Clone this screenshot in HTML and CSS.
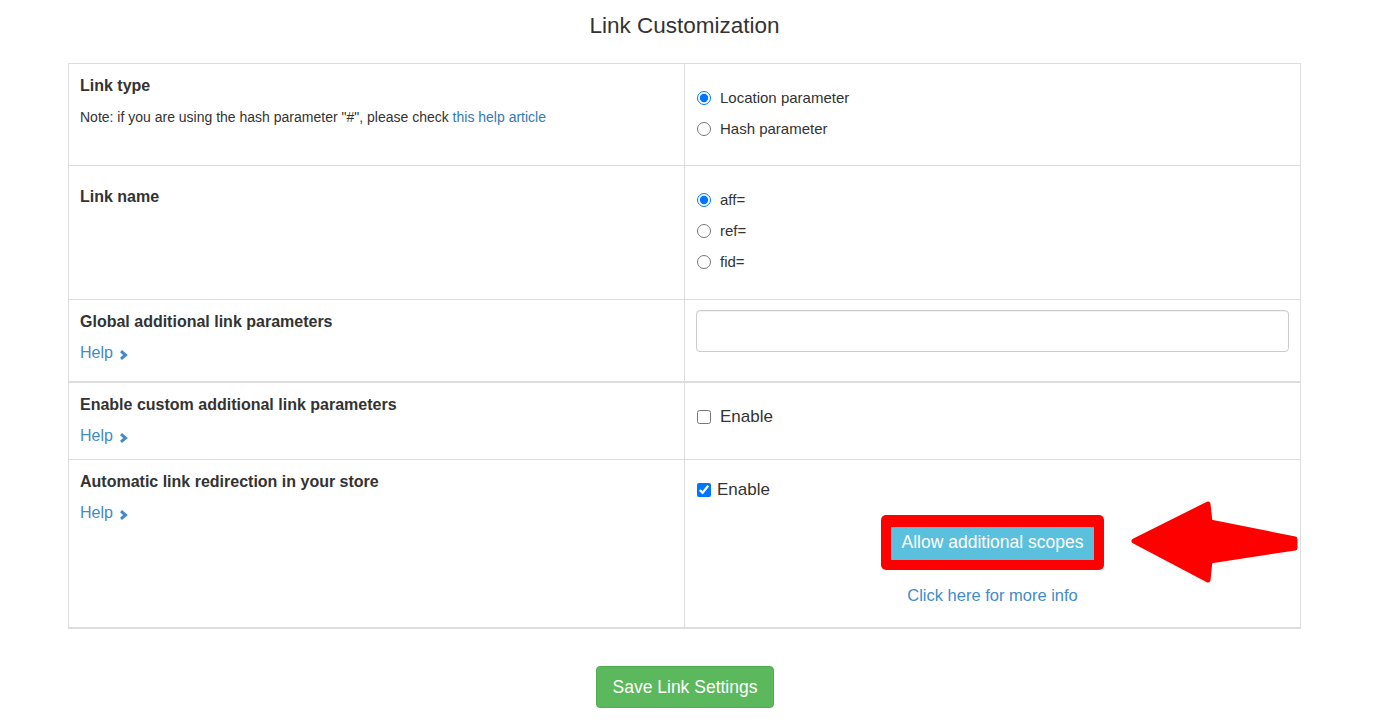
FILE: index.html
```html
<!DOCTYPE html>
<html>
<head>
<meta charset="utf-8">
<link rel="stylesheet" href="styles.css">
</head>
<body>
<h3 class="title">Link Customization</h3>
<div class="settings">
  <div class="row row-1">
    <div class="cell left">
      <div class="label">Link type</div>
      <div class="note">Note: if you are using the hash parameter "#", please check <a class="article" href="#">this help article</a></div>
    </div>
    <div class="cell right">
      <div class="options">
        <label class="opt"><input type="radio" name="lt" checked><span>Location parameter</span></label>
        <label class="opt"><input type="radio" name="lt"><span>Hash parameter</span></label>
      </div>
    </div>
  </div>
  <div class="row row-2">
    <div class="cell left">
      <div class="label label-low">Link name</div>
    </div>
    <div class="cell right">
      <div class="options">
        <label class="opt"><input type="radio" name="ln" checked><span>aff=</span></label>
        <label class="opt"><input type="radio" name="ln"><span>ref=</span></label>
        <label class="opt"><input type="radio" name="ln"><span>fid=</span></label>
      </div>
    </div>
  </div>
  <div class="row row-3">
    <div class="cell left">
      <div class="label">Global additional link parameters</div>
      <a class="help" href="#">Help <svg class="chev" width="9" height="10" viewBox="0 0 9 10"><polyline points="2,1.2 6.5,5 2,8.8" fill="none" stroke="currentColor" stroke-width="3"/></svg></a>
    </div>
    <div class="cell right input-cell">
      <input class="text-input" type="text">
    </div>
  </div>
  <div class="row row-4">
    <div class="cell left">
      <div class="label">Enable custom additional link parameters</div>
      <a class="help" href="#">Help <svg class="chev" width="9" height="10" viewBox="0 0 9 10"><polyline points="2,1.2 6.5,5 2,8.8" fill="none" stroke="currentColor" stroke-width="3"/></svg></a>
    </div>
    <div class="cell right">
      <div class="options">
        <label class="opt check"><input type="checkbox"><span>Enable</span></label>
      </div>
    </div>
  </div>
  <div class="row row-5">
    <div class="cell left">
      <div class="label">Automatic link redirection in your store</div>
      <a class="help" href="#">Help <svg class="chev" width="9" height="10" viewBox="0 0 9 10"><polyline points="2,1.2 6.5,5 2,8.8" fill="none" stroke="currentColor" stroke-width="3"/></svg></a>
    </div>
    <div class="cell right redirect">
      <label class="opt check checked"><input type="checkbox" checked><span>Enable</span></label>
      <div class="scopes">
        <div class="highlight"><button class="btn-info" type="button">Allow additional scopes</button></div>
        <a class="more" href="#">Click here for more info</a>
      </div>
      <svg class="arrow" width="176" height="88" viewBox="0 0 176 88">
        <polygon points="6,43 80,6 82,24 167,41 167,50 82,63 80,82" fill="#ff0000" stroke="#ff0000" stroke-width="5" stroke-linejoin="round"/>
      </svg>
    </div>
  </div>
</div>
<div class="actions">
  <button class="btn-save" type="button">Save Link Settings</button>
</div>
</body>
</html>
```
FILE: styles.css
```css
html, body {
  margin: 0;
  padding: 0;
  background: #fff;
}
body {
  font-family: "Liberation Sans", Arial, sans-serif;
  color: #333;
  font-size: 15px;
}
.title {
  margin: 0;
  padding-top: 13px;
  height: 26px;
  line-height: 26px;
  font-size: 22.5px;
  font-weight: normal;
  text-align: center;
  margin-bottom: 24px;
  padding-right: 4px;
}
.settings {
  margin: 0 72px 0 68px;
  border: 1px solid #ddd;
  border-bottom: none;
}
.row {
  display: grid;
  grid-template-columns: 616px 1fr;
  border-bottom: 1px solid #ddd;
}
.row-1 { height: 101px; }
.row-2 { height: 133px; }
.row-3 { height: 81px; border-bottom-width: 2px; }
.row-4 { height: 76px; }
.row-5 { height: 167px; border-bottom-width: 2px; }
.cell {
  padding: 11px;
}
.left {
  border-right: 1px solid #ddd;
}
.right {
  position: relative;
}
.label {
  font-weight: bold;
  font-size: 16px;
  line-height: 22px;
}
.label-low {
  margin-top: 9px;
}
.note {
  margin-top: 9px;
  font-size: 14px;
  line-height: 22px;
}
.article {
  color: #337ab7;
  text-decoration: none;
}
.help {
  display: inline-flex;
  align-items: center;
  gap: 6px;
  margin-top: 9px;
  font-size: 16px;
  line-height: 22px;
  color: #428bca;
  text-decoration: none;
}
.chev {
  margin-top: 3px;
}
.options {
  display: flex;
  flex-direction: column;
  gap: 10px;
  margin-top: 12px;
}
.opt {
  display: flex;
  align-items: center;
  gap: 9px;
  height: 21px;
  line-height: 21px;
  font-size: 15px;
}
.opt input {
  margin: 0 0 0 1px;
  width: 14px;
  height: 14px;
}
.check {
  font-size: 17px;
}
.checked {
  gap: 6px;
  margin-top: 8px;
}
.input-cell {
  padding-top: 10px;
}
.text-input {
  display: block;
  box-sizing: border-box;
  width: 100%;
  height: 42px;
  border: 1px solid #ccc;
  border-radius: 4px;
  box-shadow: inset 0 1px 1px rgba(0,0,0,0.06);
  font-family: inherit;
  font-size: 15px;
}
.scopes {
  display: flex;
  flex-direction: column;
  align-items: center;
  margin-top: 15px;
}
.highlight {
  background: #ff0000;
  border-radius: 5px;
  padding: 12px 10px 10px 10px;
}
.btn-info {
  display: block;
  background: #5bc0de;
  color: #fff;
  border: none;
  border-radius: 0;
  padding: 5px 11px 7px;
  font-family: inherit;
  font-size: 17.5px;
  line-height: 21px;
}
.more {
  margin-top: 14px;
  font-size: 16.5px;
  line-height: 22px;
  color: #428bca;
  text-decoration: none;
}
.arrow {
  position: absolute;
  left: 443px;
  top: 38px;
}
.actions {
  display: flex;
  justify-content: center;
  margin-top: 37px;
  padding-right: 3px;
}
.btn-save {
  background: #5cb85c;
  border: 1px solid #4cae4c;
  border-radius: 4px;
  color: #fff;
  padding: 10px 16px;
  font-family: inherit;
  font-size: 17.5px;
  line-height: 20px;
}
```
